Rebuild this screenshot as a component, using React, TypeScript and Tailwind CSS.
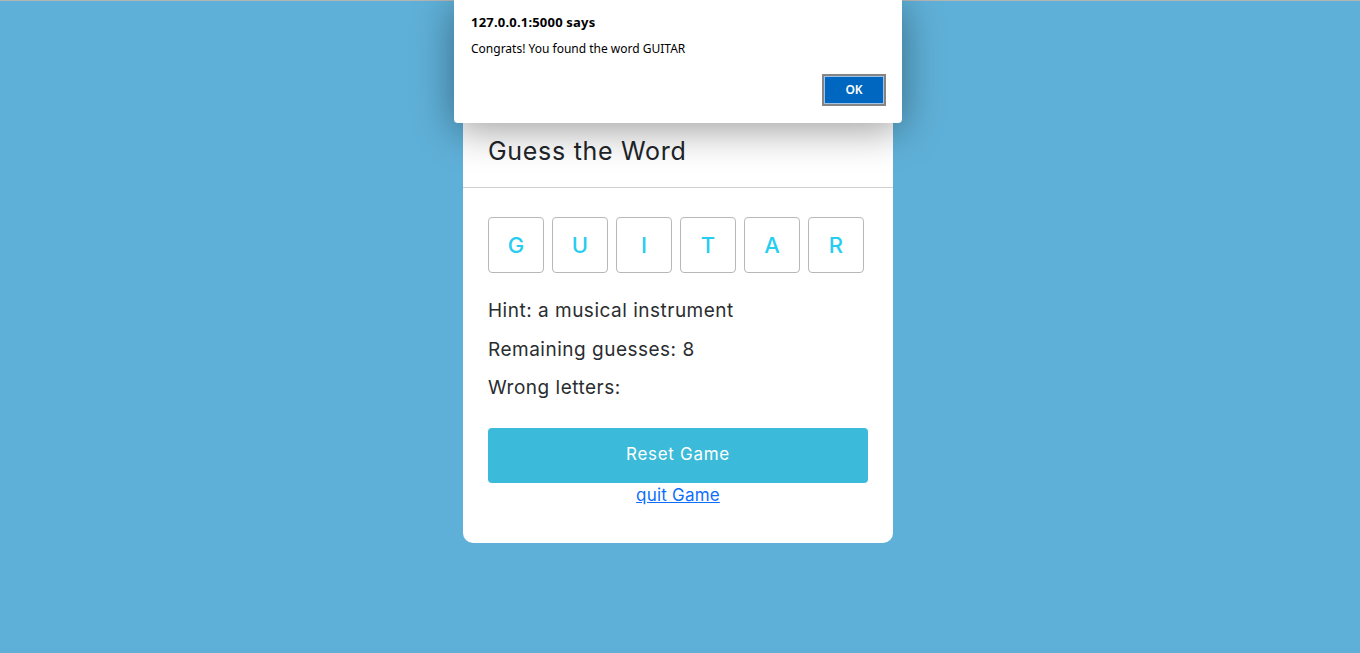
import React from "react";

export default function App() {
  const letters = ["G", "U", "I", "T", "A", "R"];
  return (
    <div
      className="relative min-h-[653px] w-full bg-[#5fb0d8] border-t border-[#b4b4b4] flex flex-col items-center"
      style={{ fontFamily: "Inter, 'Noto Sans', sans-serif" }}
    >
      {/* card */}
      <div className="mt-[104px] mr-[4px] w-[430px] bg-white rounded-[10px] overflow-hidden">
        <div className="px-[25px] pt-[30px] pb-[20px] border-b border-[#d2d2d2]">
          <h1 className="text-[25px] leading-[32px] tracking-[0.7px] text-[#212529] font-normal">Guess the Word</h1>
        </div>
        <div className="px-[25px] pt-[29px] pb-[36px]">
          <div className="flex gap-[8px]">
            {letters.map((l) => (
              <div
                key={l}
                className="w-[56px] h-[56px] border border-[#b8b8b8] rounded-[4px] flex items-center justify-center text-[22px] font-medium text-[#27cdf0]"
              >
                {l}
              </div>
            ))}
          </div>
          <div className="mt-[24px] flex flex-col gap-[10px] text-[19px] leading-[28.5px] tracking-[0.5px] text-[#2a2d30]">
            <p>Hint: a musical instrument</p>
            <p>Remaining guesses: 8</p>
            <p>Wrong letters:</p>
          </div>
          <button className="mt-[25px] w-full h-[55px] rounded-[4px] bg-[#3bbad9] text-white text-[17px] tracking-[0.7px]">
            Reset Game
          </button>
          <div className="text-center leading-[24px]">
            <a href="#" className="text-[#0d6efd] underline text-[17px] tracking-[0.2px]">
              quit Game
            </a>
          </div>
        </div>
      </div>

      {/* browser alert dialog */}
      <div
        className="absolute -top-px left-[454px] w-[448px] h-[123px] bg-white rounded-b-[4px] shadow-[0_6px_40px_rgba(0,0,0,0.4)] px-[17px]"
        style={{ fontFamily: "'Noto Sans', 'Open Sans', sans-serif" }}
      >
        <div className="pt-[12px] text-[13px] leading-[20px] font-bold text-black tracking-[0.2px]">127.0.0.1:5000 says</div>
        <div className="mt-[8px] text-[12px] leading-[18px] text-black">Congrats! You found the word GUITAR</div>
        <div className="flex justify-end mt-[16px]">
          <div className="w-[64px] h-[32px] border-2 border-[#858585] bg-[#0067c0] shadow-[inset_0_0_0_1px_#9fc3e6] flex items-center justify-center text-white text-[12px] font-semibold -mr-[1px]">
            OK
          </div>
        </div>
      </div>
    </div>
  );
}
